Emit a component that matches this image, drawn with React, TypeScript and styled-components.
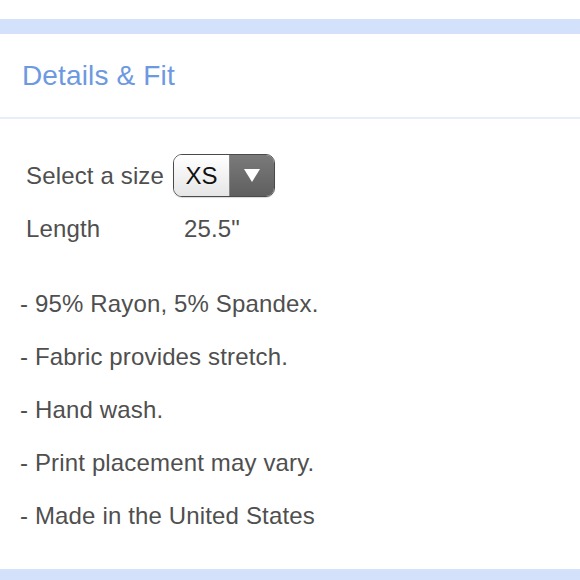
import React from "react";
import styled, { createGlobalStyle } from "styled-components";

const Global = createGlobalStyle`
  html, body { margin: 0; padding: 0; background: #ffffff; }
  body { font-family: "Liberation Sans", Arial, Helvetica, sans-serif; -webkit-font-smoothing: antialiased; }
`;

const Page = styled.div`
  width: 580px;
  height: 580px;
  overflow: hidden;
  display: flex;
  flex-direction: column;
  background: #ffffff;
`;

const Band = styled.div<{ $top: number; $h: number }>`
  margin-top: ${(p) => p.$top}px;
  height: ${(p) => p.$h}px;
  background: #d3e2fa;
  flex-shrink: 0;
`;

const Header = styled.div`
  height: 83px;
  display: flex;
  align-items: center;
  padding-left: 22px;
  border-bottom: 2px solid #e9eefc;
`;

const Title = styled.h2`
  margin: 0;
  font-weight: normal;
  font-size: 28px;
  color: #6d99e1;
  letter-spacing: 0.15px;
`;

const Body = styled.div`
  flex: 1;
  padding: 35px 0 0 20px;
  color: #4f4f4f;
  font-size: 24px;
  letter-spacing: 0.15px;
`;

const Row = styled.div<{ $h: number }>`
  display: flex;
  align-items: center;
  height: ${(p) => p.$h}px;
  padding-left: 6px;
`;

const Label = styled.span<{ $w: number }>`
  width: ${(p) => p.$w}px;
  flex-shrink: 0;
`;

const Select = styled.div`
  display: flex;
  width: 102px;
  height: 43px;
  box-sizing: border-box;
  border: 1.5px solid #4a4a4a;
  border-radius: 9px;
  overflow: hidden;
  box-shadow: 0 1px 1px rgba(0, 0, 0, 0.15);
`;

const SelectValue = styled.div`
  width: 55px;
  display: flex;
  align-items: center;
  justify-content: center;
  color: #111;
  font-size: 24px;
  letter-spacing: 0;
  background: linear-gradient(#ffffff, #e6e6e6);
  border-right: 1px solid #888;
`;

const SelectArrow = styled.div`
  flex: 1;
  display: flex;
  align-items: center;
  justify-content: center;
  background: linear-gradient(#7a7a7a, #5f5f5f);
`;

const List = styled.ul`
  list-style: none;
  margin: 16px 0 0 0;
  padding: 0;
`;

const Item = styled.li`
  height: 53px;
  display: flex;
  align-items: center;
`;

const items = [
  "- 95% Rayon, 5% Spandex.",
  "- Fabric provides stretch.",
  "- Hand wash.",
  "- Print placement may vary.",
  "- Made in the United States",
];

export default function App() {
  return (
    <Page>
      <Global />
      <Band $top={19} $h={15} />
      <Header>
        <Title>Details &amp; Fit</Title>
      </Header>
      <Body>
        <Row $h={43}>
          <Label $w={147}>Select a size</Label>
          <Select>
            <SelectValue>XS</SelectValue>
            <SelectArrow>
              <svg width="16" height="13" viewBox="0 0 16 13">
                <polygon points="0,0 16,0 8,13" fill="#ffffff" />
              </svg>
            </SelectArrow>
          </Select>
        </Row>
        <Row $h={64}>
          <Label $w={158}>Length</Label>
          <span>25.5"</span>
        </Row>
        <List>
          {items.map((t) => (
            <Item key={t}>{t}</Item>
          ))}
        </List>
      </Body>
      <Band $top={0} $h={11} />
    </Page>
  );
}
